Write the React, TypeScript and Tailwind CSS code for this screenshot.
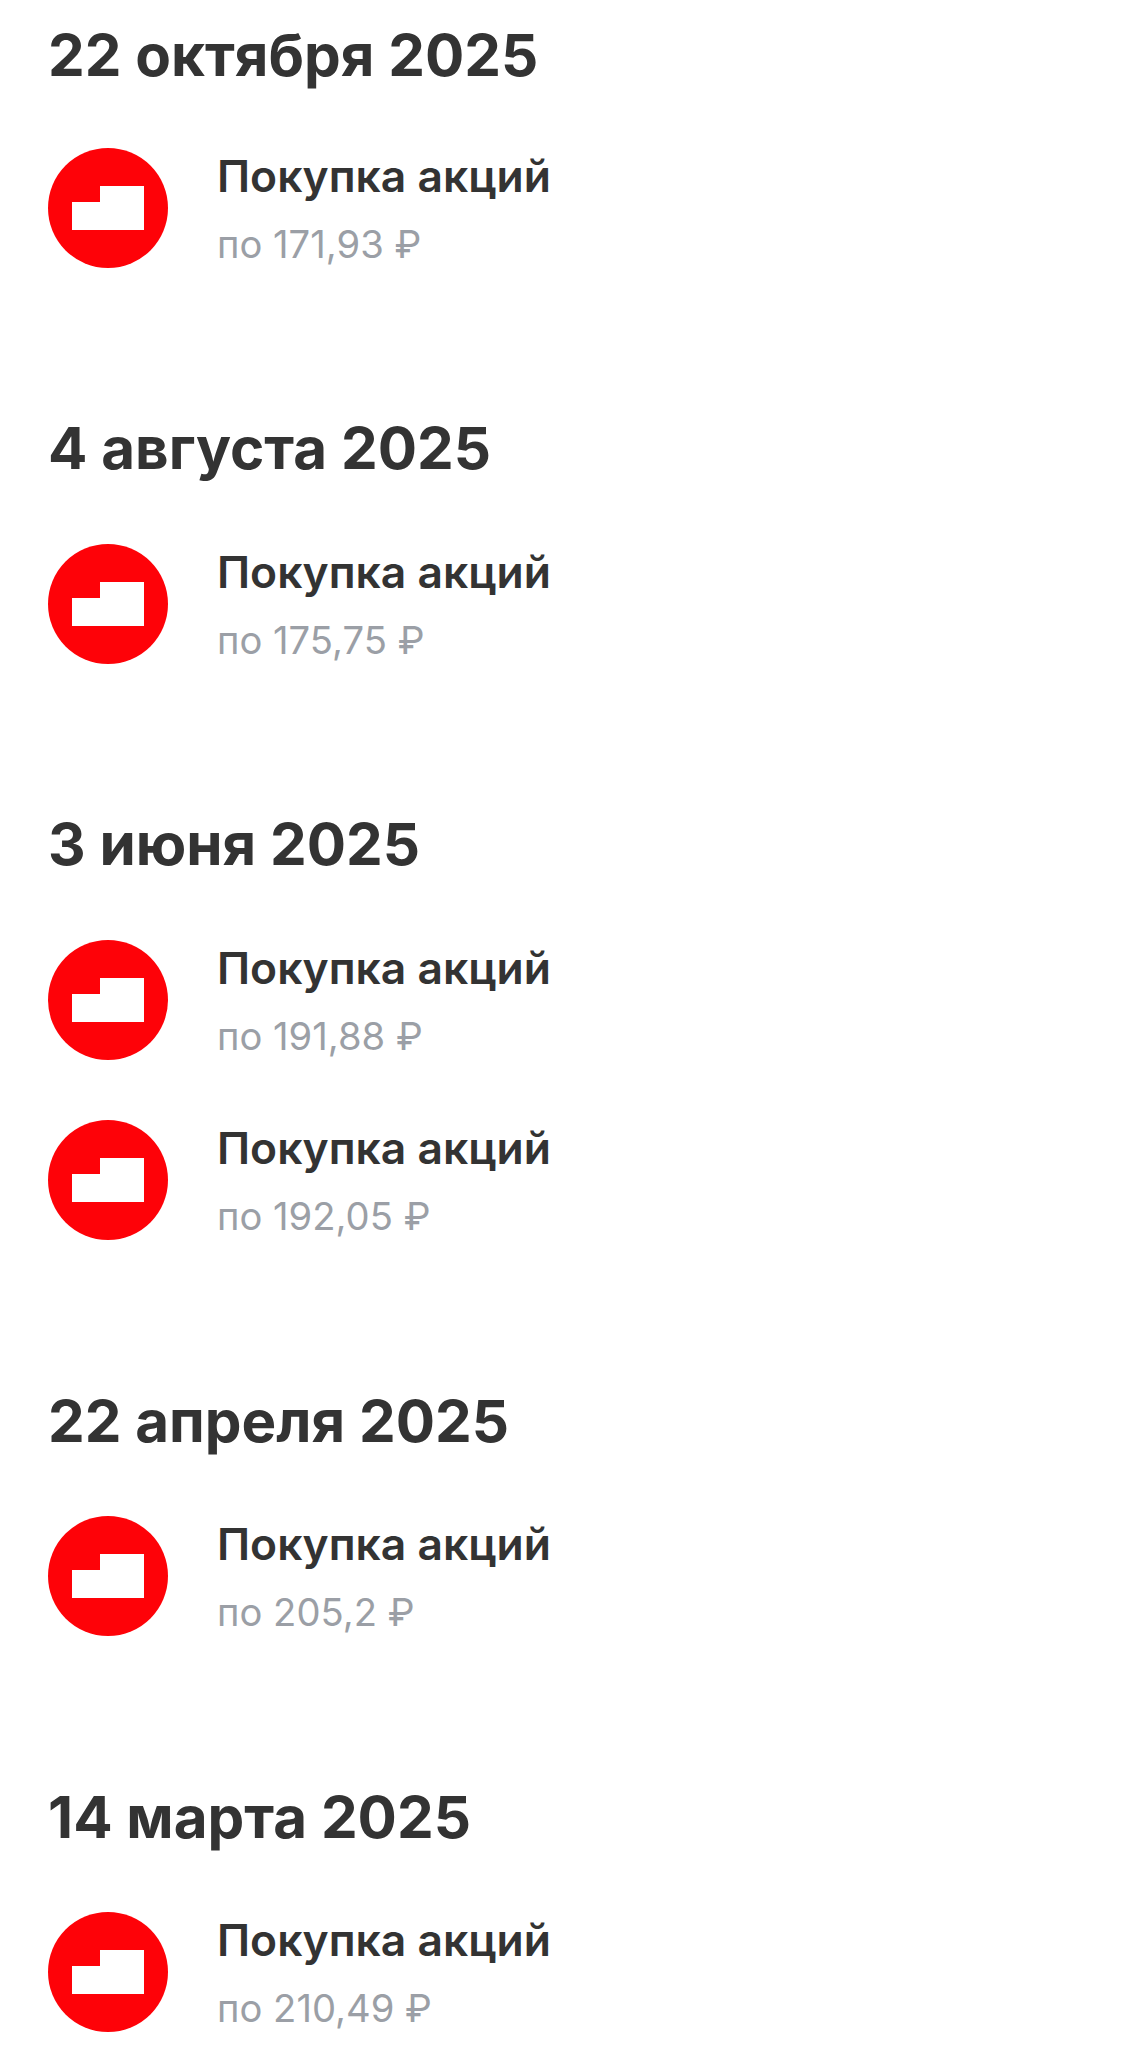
const groups = [
  { date: "22 октября 2025", prices: ["по 171,93 ₽"], head: "pt-[22px] mb-[60px]" },
  { date: "4 августа 2025", prices: ["по 175,75 ₽"], head: "pt-[19px] mb-[63px]" },
  { date: "3 июня 2025", prices: ["по 191,88 ₽", "по 192,05 ₽"], head: "pt-[19px] mb-[63px]" },
  { date: "22 апреля 2025", prices: ["по 205,2 ₽"], head: "pt-[20px] mb-[62px]" },
  { date: "14 марта 2025", prices: ["по 210,49 ₽"], head: "pt-[20px] mb-[62px]" },
];

function Logo() {
  return (
    <svg width="120" height="120" viewBox="0 0 120 120" className="shrink-0">
      <circle cx="60" cy="60" r="60" fill="#fe0208" />
      <path d="M24 54H52V38H96V82H24Z" fill="#fff" />
    </svg>
  );
}

export default function App() {
  return (
    <div className="h-[2052px] overflow-hidden bg-white pl-12 font-['Inter',sans-serif]">
      {groups.map((group) => (
        <section key={group.date} className="h-[396px] [&:nth-child(3)]:h-[576px]">
          <h2 className={`${group.head} text-[58.3px] leading-[66px] font-bold text-[#333333]`}>{group.date}</h2>
          <div className="flex flex-col gap-[60px]">
            {group.prices.map((price) => (
              <div key={price} className="flex h-[120px] items-center gap-[49px]">
                <Logo />
                <div>
                  <div className="text-[44.4px] leading-[54px] font-semibold text-[#333333]">Покупка акций</div>
                  <div className="mt-[18px] text-[38.2px] leading-[46px] text-[#9b9fa6]">{price}</div>
                </div>
              </div>
            ))}
          </div>
        </section>
      ))}
    </div>
  );
}
